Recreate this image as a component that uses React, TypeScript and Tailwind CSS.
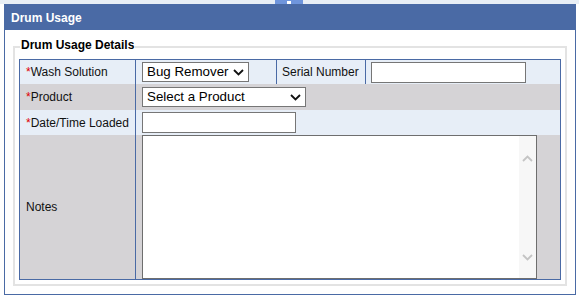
const font = { fontFamily: '"Liberation Sans", Arial, sans-serif' };

function Chevron({ color = '#111', up }: { color?: string; up?: boolean }) {
  return (
    <svg width="11" height="7" viewBox="0 0 11 7" className={up ? 'rotate-180' : ''}>
      <path d="M1 1l4.5 4.5L10 1" fill="none" stroke={color} strokeWidth="1.8" />
    </svg>
  );
}

function FakeSelect({ value, width }: { value: string; width: string }) {
  return (
    <div
      className={`flex items-center justify-between h-[20px] ${width} border border-[#767676] bg-white pl-[4px] pr-[4px] text-[13.33px] leading-none text-black`}
    >
      <span>{value}</span>
      <Chevron />
    </div>
  );
}

function Label({ text, required }: { text: string; required?: boolean }) {
  return (
    <div className="flex items-center w-[116px] shrink-0 border-r border-[#4a6aa5] pl-[6px] text-[12px] text-[#111]">
      {required && <span className="text-[#e00000]">*</span>}
      {text}
    </div>
  );
}

export default function App() {
  return (
    <div className="w-[579px] h-[299px] bg-white overflow-hidden" style={font}>
      {/* top strip with tab */}
      <div className="h-[4px] bg-[#e8eef5] flex justify-center">
        <div className="ml-[-2px] w-[28px] h-[4px] bg-[#6f95dc] flex justify-center">
          <div className="w-[4px] h-[3px] bg-white mt-[1px]" />
        </div>
      </div>

      <div className="ml-[4px] w-[572px] h-[291px] border border-[#4a6aa5] flex flex-col">
        <div className="h-[25px] bg-[#4a6aa5] flex items-center pl-[6px] text-[12px] font-bold text-white">
          Drum Usage
        </div>

        <div className="relative mt-[16px] mx-[8px] h-[240px] border-2 border-[#e3e3e3] pt-[11px] px-[4px] pb-[4px]">
          <span className="absolute top-[-10px] left-[5px] bg-white px-[1px] text-[12px] leading-[14px] font-bold text-black">
            Drum Usage Details
          </span>

          <div className="w-[542px] border border-[#4a6aa5] flex flex-col">
            <div className="flex h-[24px] bg-[#e7eef7]">
              <Label text="Wash Solution" required />
              <div className="flex items-center w-[141px] border-r border-[#4a6aa5] pl-[6px]">
                <FakeSelect value="Bug Remover" width="w-[107px]" />
              </div>
              <div className="flex items-center w-[89px] border-r border-[#4a6aa5] pl-[5px] text-[12px] text-[#111]">
                Serial Number
              </div>
              <div className="flex items-center flex-1 pl-[5px]">
                <div className="w-[155px] h-[21px] border border-[#767676] bg-white" />
              </div>
            </div>

            <div className="flex h-[26px] bg-[#d5d3d6]">
              <Label text="Product" required />
              <div className="flex items-center flex-1 pl-[6px]">
                <FakeSelect value="Select a Product" width="w-[164px]" />
              </div>
            </div>

            <div className="flex h-[25px] bg-[#e7eef7]">
              <Label text="Date/Time Loaded" required />
              <div className="flex items-center flex-1 pl-[6px]">
                <div className="w-[154px] h-[21px] border border-[#767676] bg-white" />
              </div>
            </div>

            <div className="flex h-[144px] bg-[#d5d3d6]">
              <Label text="Notes" />
              <div className="flex flex-1 pl-[6px]">
                <div className="flex w-[395px] h-[144px] border border-[#6e6e6e] bg-white">
                  <div className="flex-1" />
                  <div className="w-[17px] bg-[#f7f7f7] flex flex-col items-center justify-between pt-[19px] pb-[17px]">
                    <Chevron color="#c4c4c4" up />
                    <Chevron color="#c4c4c4" />
                  </div>
                </div>
              </div>
            </div>
          </div>
        </div>
      </div>
    </div>
  );
}
